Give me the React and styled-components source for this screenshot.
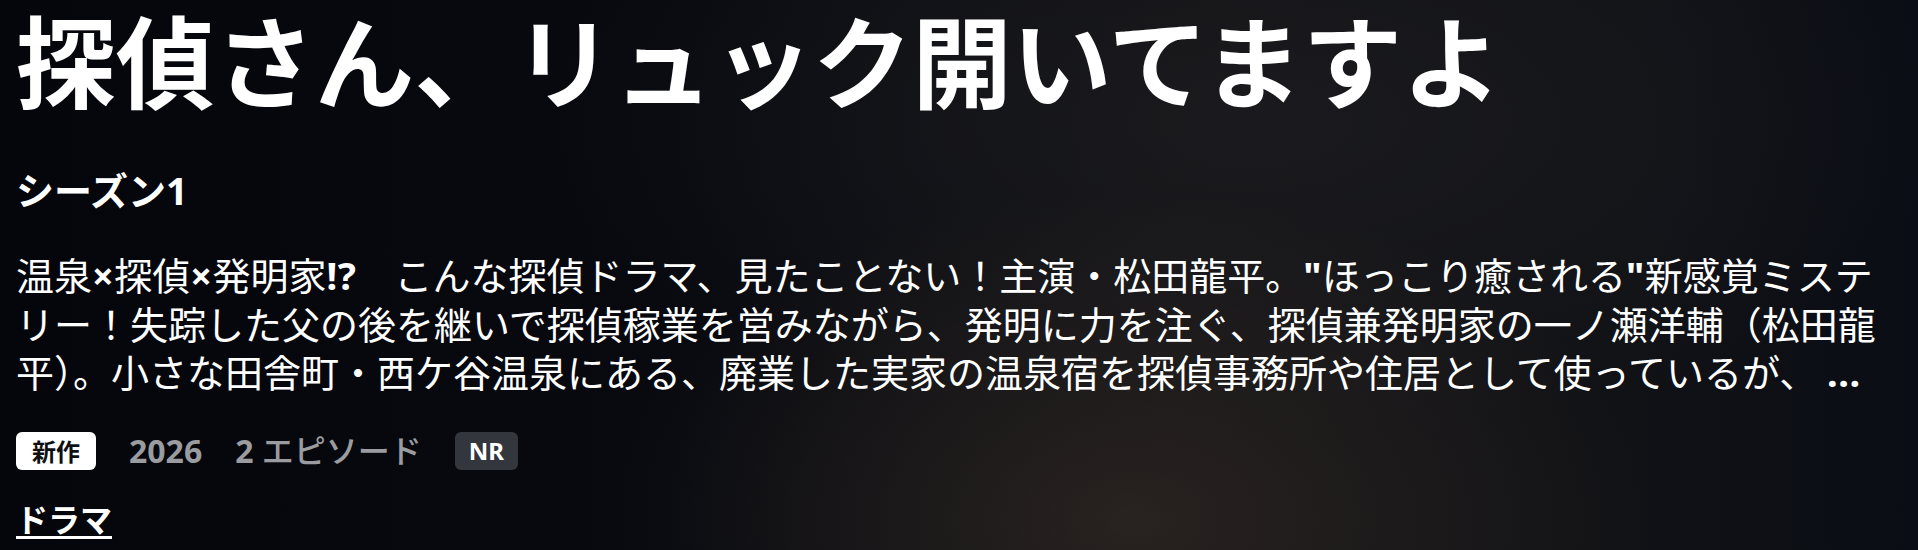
import React from "react";
import styled, { createGlobalStyle } from "styled-components";

const GlobalStyle = createGlobalStyle`
  html, body {
    margin: 0;
    padding: 0;
    background: #06080e;
  }
  body {
    font-family: "Noto Sans", "Noto Sans CJK JP", sans-serif;
    -webkit-font-smoothing: antialiased;
  }
`;

export default function App() {
  return (
    <Page>
      <GlobalStyle />
      <Detail>
        <Title>探偵さん、リュック開いてますよ</Title>
        <Season>シーズン1</Season>
        <Synopsis>
          温泉<Sym>×</Sym>探偵<Sym>×</Sym>発明家<Sym>!?</Sym>　こんな探偵ドラマ、見たことない！主演・松田龍平。<Sym>"</Sym>ほっこり癒される<Sym>"</Sym>新感覚ミステ
          <br />
          リー！失踪した父の後を継いで探偵稼業を営みながら、発明に力を注ぐ、探偵兼発明家の一ノ瀬洋輔（松田龍
          <br />
          平）。小さな田舎町・西ケ谷温泉にある、廃業した実家の温泉宿を探偵事務所や住居として使っているが、 <Sym>...</Sym>
        </Synopsis>
        <MetaRow>
          <Badge $variant="light">新作</Badge>
          <MetaText>2026</MetaText>
          <MetaText>
            2 <Kana>エピソード</Kana>
          </MetaText>
          <Badge $variant="dark">NR</Badge>
        </MetaRow>
        <GenreLink href="#">ドラマ</GenreLink>
      </Detail>
    </Page>
  );
}

// Styled Components
const Page = styled.div`
  width: 1918px;
  height: 550px;
  overflow: hidden;
  background:
    radial-gradient(ellipse 520px 330px at 1130px 520px, rgba(48, 40, 36, 0.75), rgba(48, 40, 36, 0) 100%),
    radial-gradient(ellipse 700px 320px at 1250px 120px, rgba(30, 30, 34, 0.7), rgba(30, 30, 34, 0) 100%),
    linear-gradient(90deg, #04060c 0%, #080a10 35%, #121215 62%, #111216 85%, #0a0d15 100%);
`;

const Detail = styled.div`
  display: flex;
  flex-direction: column;
  align-items: flex-start;
  padding: 0 0 0 16px;
  width: 1890px;
  color: #ffffff;
`;

const Title = styled.h1`
  margin: 0;
  font-family: "Noto Sans CJK JP", sans-serif;
  font-size: 99.6px;
  font-weight: 700;
  line-height: 116px;
  white-space: nowrap;
`;

const Season = styled.h2`
  margin: 50px 0 0;
  font-family: "Noto Sans", "Noto Sans CJK JP", sans-serif;
  font-size: 38px;
  font-weight: 700;
  line-height: 48px;
`;

const Synopsis = styled.p`
  margin: 37px 0 0;
  font-size: 38px;
  font-weight: 400;
  line-height: 48.6px;
  color: #ffffff;
  white-space: nowrap;
`;

const Sym = styled.span`
  font-weight: 700;
  letter-spacing: 0.5px;
`;

const MetaRow = styled.div`
  display: flex;
  align-items: center;
  gap: 33px;
  margin-top: 35px;
  height: 38px;
`;

const Badge = styled.span`
  display: inline-flex;
  align-items: center;
  height: 38px;
  padding: ${(p) => (p.$variant === "light" ? "0 16px" : "0 14px")};
  border-radius: 6px;
  font-size: 24px;
  font-weight: 700;
  background: ${(p) => (p.$variant === "light" ? "#ffffff" : "#33363c")};
  color: ${(p) => (p.$variant === "light" ? "#0f1111" : "#ffffff")};
`;

const MetaText = styled.span`
  font-size: 32px;
  font-weight: 700;
  color: #9b9c9f;
  line-height: 38px;
`;

const Kana = styled.span`
  font-weight: 500;
`;

const GenreLink = styled.a`
  margin-top: 30px;
  font-size: 32px;
  font-weight: 700;
  line-height: 40px;
  color: #ffffff;
  text-decoration: underline;
  text-decoration-thickness: 3px;
  text-underline-offset: 4px;
`;
